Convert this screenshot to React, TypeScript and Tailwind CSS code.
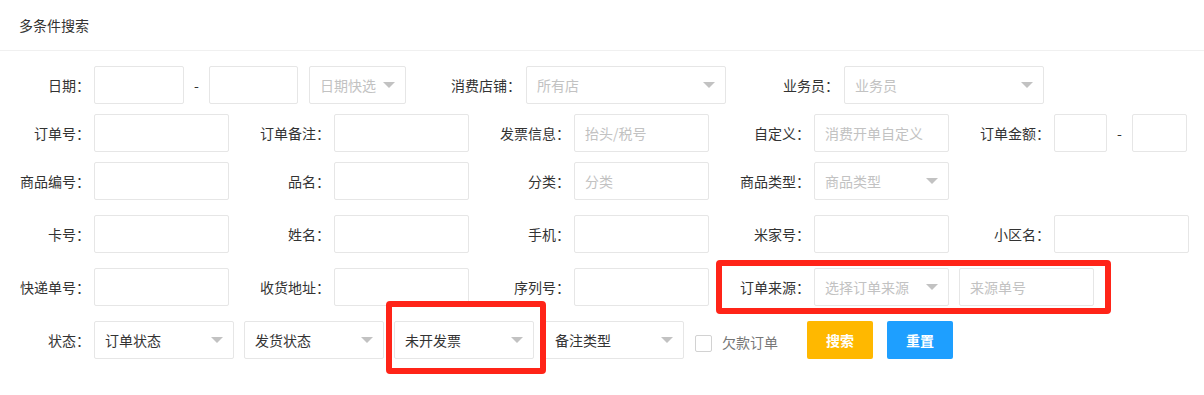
import React from "react";

const font = { fontFamily: '"Noto Sans CJK SC", "Microsoft YaHei", sans-serif' };

function Label({ text, w }: { text: string; w: string }) {
  return (
    <div className={`${w} shrink-0 pr-[4px] text-right text-[14px] text-[#333] leading-[38px]`}>
      {text}
    </div>
  );
}

function Input({ w, ph }: { w: string; ph?: string }) {
  return (
    <div
      className={`${w} h-[38px] shrink-0 border border-[#e6e6e6] bg-white rounded-[2px] pl-[10px] flex items-center text-[14px] text-[#c2c2c2]`}
    >
      {ph ?? ""}
    </div>
  );
}

function Select({ w, text, dark }: { w: string; text: string; dark?: boolean }) {
  return (
    <div
      className={`${w} h-[38px] shrink-0 border border-[#e6e6e6] bg-white rounded-[2px] pl-[10px] pr-[10px] flex items-center justify-between text-[14px] ${
        dark ? "text-[#333]" : "text-[#c2c2c2]"
      }`}
    >
      <span className="whitespace-nowrap">{text}</span>
      <span className="w-0 h-0 border-x-[6px] border-x-transparent border-t-[6px] border-t-[#c2c2c2] mt-[-1px]" />
    </div>
  );
}

function Field({ label, children }: { label: string; children: React.ReactNode }) {
  return (
    <div className="w-[240px] shrink-0 flex items-center">
      <Label text={label} w="w-[94px]" />
      {children}
    </div>
  );
}

export default function App() {
  return (
    <div className="relative w-[1204px] h-[395px] bg-white overflow-hidden" style={font}>
      <div className="h-[51px] border-b border-[#f0f0f0] pl-[19px] flex items-center text-[14px] text-[#333]">
        多条件搜索
      </div>

      {/* Row 1 */}
      <div className="mt-[15px] flex items-center h-[38px]">
        <Label text="日期：" w="w-[94px]" />
        <Input w="w-[90px]" />
        <div className="w-[25px] text-center text-[14px] text-[#333]">-</div>
        <Input w="w-[89px]" />
        <div className="ml-[11px]">
          <Select w="w-[97px]" text="日期快选" />
        </div>
        <div className="w-[120px] shrink-0 pr-[5px] text-right text-[14px] text-[#333]">消费店铺：</div>
        <Select w="w-[200px]" text="所有店" />
        <div className="w-[118px] shrink-0 pr-[5px] text-right text-[14px] text-[#333]">业务员：</div>
        <Select w="w-[200px]" text="业务员" />
      </div>

      {/* Row 2 */}
      <div className="mt-[10px] flex items-center h-[38px]">
        <Field label="订单号：">
          <Input w="w-[135px]" />
        </Field>
        <Field label="订单备注：">
          <Input w="w-[135px]" />
        </Field>
        <Field label="发票信息：">
          <Input w="w-[135px]" ph="抬头/税号" />
        </Field>
        <Field label="自定义：">
          <Input w="w-[135px]" ph="消费开单自定义" />
        </Field>
        <div className="flex items-center">
          <Label text="订单金额：" w="w-[94px]" />
          <Input w="w-[53px]" />
          <div className="w-[25px] text-center text-[14px] text-[#333]">-</div>
          <Input w="w-[55px]" />
        </div>
      </div>

      {/* Row 3 */}
      <div className="mt-[10px] flex items-center h-[38px]">
        <Field label="商品编号：">
          <Input w="w-[135px]" />
        </Field>
        <Field label="品名：">
          <Input w="w-[135px]" />
        </Field>
        <Field label="分类：">
          <Input w="w-[135px]" ph="分类" />
        </Field>
        <Field label="商品类型：">
          <Select w="w-[135px]" text="商品类型" />
        </Field>
      </div>

      {/* Row 4 */}
      <div className="mt-[15px] flex items-center h-[38px]">
        <Field label="卡号：">
          <Input w="w-[135px]" />
        </Field>
        <Field label="姓名：">
          <Input w="w-[135px]" />
        </Field>
        <Field label="手机：">
          <Input w="w-[135px]" />
        </Field>
        <Field label="米家号：">
          <Input w="w-[135px]" />
        </Field>
        <Field label="小区名：">
          <Input w="w-[135px]" />
        </Field>
      </div>

      {/* Row 5 */}
      <div className="mt-[15px] flex items-center h-[38px]">
        <Field label="快递单号：">
          <Input w="w-[135px]" />
        </Field>
        <Field label="收货地址：">
          <Input w="w-[135px]" />
        </Field>
        <Field label="序列号：">
          <Input w="w-[135px]" />
        </Field>
        <div className="flex items-center">
          <Label text="订单来源：" w="w-[94px]" />
          <Select w="w-[135px]" text="选择订单来源" />
          <div className="ml-[10px]">
            <Input w="w-[135px]" ph="来源单号" />
          </div>
        </div>
      </div>

      {/* Row 6 */}
      <div className="mt-[15px] flex items-center h-[38px]">
        <Label text="状态：" w="w-[94px]" />
        <div className="flex items-center gap-[10px]">
          <Select w="w-[140px]" text="订单状态" dark />
          <Select w="w-[140px]" text="发货状态" dark />
          <Select w="w-[140px]" text="未开发票" dark />
          <Select w="w-[140px]" text="备注类型" dark />
        </div>
        <div className="ml-[11px] flex items-center">
          <div className="w-[17px] h-[17px] border border-[#d2d2d2] rounded-[2px] bg-white mt-[7px]" />
          <span className="ml-[10px] text-[14px] text-[#777] mt-[4px]">欠款订单</span>
        </div>
        <button className="ml-[29px] w-[66px] h-[38px] rounded-[2px] bg-[#FFB800] text-white text-[14px] font-bold">
          搜索
        </button>
        <button className="ml-[14px] w-[66px] h-[38px] rounded-[2px] bg-[#1E9FFF] text-white text-[14px] font-bold">
          重置
        </button>
      </div>

      {/* Red annotation boxes */}
      <div className="absolute left-[716px] top-[260px] w-[395px] h-[54px] border-[6px] border-[#ff2418] rounded-[4px] pointer-events-none" />
      <div className="absolute left-[386px] top-[301px] w-[160px] h-[73px] border-[6px] border-[#ff2418] rounded-[4px] pointer-events-none" />
    </div>
  );
}
